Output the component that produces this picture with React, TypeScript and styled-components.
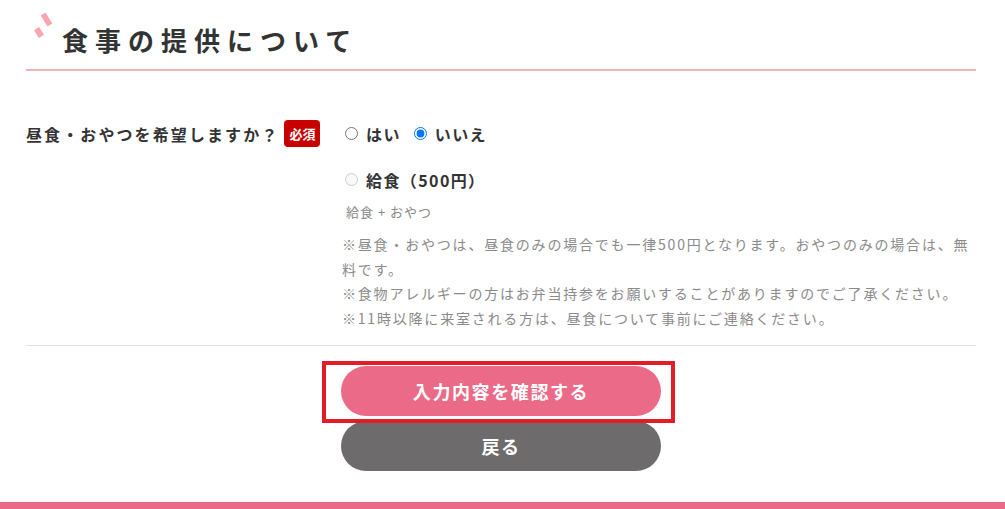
import React from 'react';
import styled, { createGlobalStyle } from 'styled-components';

const GlobalStyle = createGlobalStyle`
  html, body {
    margin: 0;
    padding: 0;
    background: #fff;
  }
  body {
    font-family: "Noto Sans CJK JP", "Noto Sans", sans-serif;
    color: #333;
  }
`;

const Page = styled.div`
  width: 1005px;
  height: 509px;
  display: flex;
  flex-direction: column;
  overflow: hidden;
`;

const Section = styled.section`
  padding: 0 29px 0 26px;
`;

const Heading = styled.h2`
  margin: 0;
  display: flex;
  align-items: flex-start;
  padding: 21px 0 10px 8px;
  border-bottom: 2px solid #f0b3b9;
`;

const HeadingDeco = styled.svg`
  flex: none;
  width: 20px;
  height: 28px;
  margin: -9px 8px 0 0;
`;

const HeadingText = styled.span`
  font-size: 26px;
  line-height: 38px;
  font-weight: 700;
  letter-spacing: 7px;
  color: #333;
`;

const FormRow = styled.div`
  display: grid;
  grid-template-columns: 316px 1fr;
  padding: 49px 0 15px;
  border-bottom: 1px solid #e3e3e3;
`;

const LabelCell = styled.div`
  display: flex;
  align-items: center;
  align-self: start;
  height: 27px;
  gap: 5px;
`;

const LabelText = styled.span`
  font-size: 16px;
  font-weight: 700;
  letter-spacing: 2.1px;
  color: #333;
`;

const RequiredBadge = styled.span`
  display: inline-flex;
  align-items: center;
  justify-content: center;
  width: 36px;
  height: 27px;
  border-radius: 4px;
  background: #c70000;
  color: #fff;
  font-size: 13px;
  font-weight: 700;
`;

const FieldCell = styled.div`
  display: flex;
  flex-direction: column;
`;

const OptionLine = styled.div<{ $gapTop?: number }>`
  display: flex;
  align-items: center;
  height: 27px;
  margin-top: ${p => p.$gapTop ?? 0}px;
`;

const OptionLabel = styled.label<{ $disabled?: boolean }>`
  display: inline-flex;
  align-items: center;
  margin-right: 10px;
  font-size: 16px;
  font-weight: 700;
  letter-spacing: 1.4px;
  color: #333;
  cursor: ${p => (p.$disabled ? 'default' : 'pointer')};
`;

const Radio = styled.input`
  width: 13px;
  height: 13px;
  margin: 0 8px 0 3px;
`;

const SubText = styled.div`
  margin-top: 9px;
  font-size: 13px;
  line-height: 20px;
  letter-spacing: 1px;
  color: #888;
  padding-left: 4px;
`;

const Notes = styled.p`
  margin: 10px 0 0;
  font-size: 14px;
  line-height: 24.5px;
  letter-spacing: 1.8px;
  color: #8a8a8a;
`;

const Actions = styled.div`
  display: flex;
  flex-direction: column;
  align-items: center;
  gap: 5px;
  padding-top: 20px;
`;

const Button = styled.button<{ $variant: 'primary' | 'back' }>`
  position: relative;
  width: 320px;
  height: 50px;
  border: none;
  border-radius: 25px;
  background: ${p => (p.$variant === 'primary' ? '#eb6a88' : '#6d6b6c')};
  color: #fff;
  font-family: inherit;
  font-size: 18px;
  font-weight: 700;
  letter-spacing: 1.6px;
  cursor: pointer;
  z-index: ${p => (p.$variant === 'primary' ? 2 : 1)};
`;

const HighlightBox = styled.span`
  position: absolute;
  left: -19px;
  right: -14px;
  top: -5px;
  bottom: -7px;
  border: 4px solid #e31d27;
  pointer-events: none;
`;

const FooterBar = styled.div`
  margin-top: auto;
  height: 7px;
  background: #eb6a88;
`;

export default function App() {
  return (
    <>
      <GlobalStyle />
      <Page>
        <Section>
          <Heading>
            <HeadingDeco viewBox="0 0 20 28">
              <rect x="9.7" y="1" width="5.6" height="13" fill="#f7a5ae" transform="rotate(-32 12.5 7.5)" />
              <rect x="2" y="16" width="6" height="9" fill="#f7a5ae" transform="rotate(-32 5 20.5)" />
            </HeadingDeco>
            <HeadingText>食事の提供について</HeadingText>
          </Heading>

          <FormRow>
            <LabelCell>
              <LabelText>昼食・おやつを希望しますか？</LabelText>
              <RequiredBadge>必須</RequiredBadge>
            </LabelCell>
            <FieldCell>
              <OptionLine>
                <OptionLabel>
                  <Radio type="radio" name="snack" value="yes" />
                  はい
                </OptionLabel>
                <OptionLabel>
                  <Radio type="radio" name="snack" value="no" defaultChecked />
                  いいえ
                </OptionLabel>
              </OptionLine>
              <OptionLine $gapTop={19}>
                <OptionLabel $disabled>
                  <Radio type="radio" name="meal" disabled />
                  給食（500円）
                </OptionLabel>
              </OptionLine>
              <SubText>給食 + おやつ</SubText>
              <Notes>
                ※昼食・おやつは、昼食のみの場合でも一律500円となります。おやつのみの場合は、無料です。
                <br />
                ※食物アレルギーの方はお弁当持参をお願いすることがありますのでご了承ください。
                <br />
                ※11時以降に来室される方は、昼食について事前にご連絡ください。
              </Notes>
            </FieldCell>
          </FormRow>

          <Actions>
            <Button $variant="primary" type="button">
              入力内容を確認する
              <HighlightBox />
            </Button>
            <Button $variant="back" type="button">
              戻る
            </Button>
          </Actions>
        </Section>
        <FooterBar />
      </Page>
    </>
  );
}
